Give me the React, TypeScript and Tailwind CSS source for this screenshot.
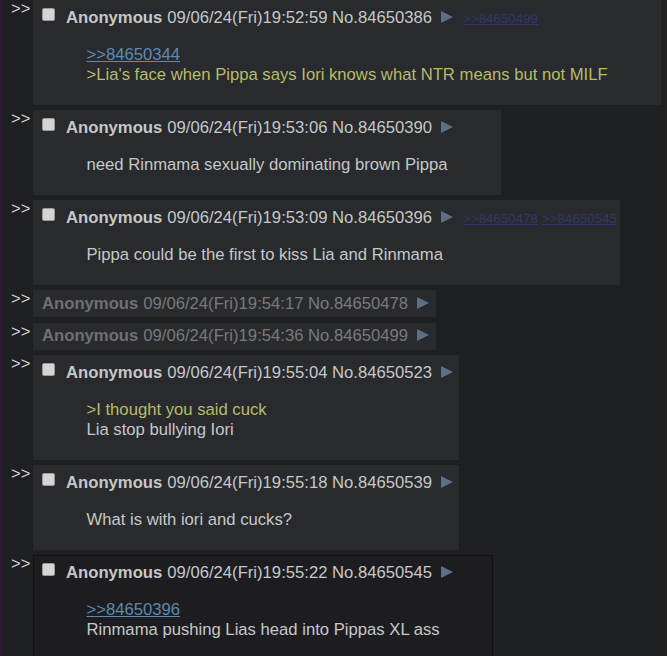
import React from "react";

type Line = { kind: "text" | "green" | "link"; value: string };

type Post = {
  id: string;
  time: string;
  hidden?: boolean;
  highlight?: boolean;
  backlinks?: string[];
  body?: Line[];
};

const posts: Post[] = [
  {
    id: "84650386",
    time: "09/06/24(Fri)19:52:59",
    backlinks: ["84650499"],
    body: [
      { kind: "link", value: "84650344" },
      { kind: "green", value: ">Lia's face when Pippa says Iori knows what NTR means but not MILF" },
    ],
  },
  {
    id: "84650390",
    time: "09/06/24(Fri)19:53:06",
    body: [{ kind: "text", value: "need Rinmama sexually dominating brown Pippa" }],
  },
  {
    id: "84650396",
    time: "09/06/24(Fri)19:53:09",
    backlinks: ["84650478", "84650545"],
    body: [{ kind: "text", value: "Pippa could be the first to kiss Lia and Rinmama" }],
  },
  { id: "84650478", time: "09/06/24(Fri)19:54:17", hidden: true },
  { id: "84650499", time: "09/06/24(Fri)19:54:36", hidden: true },
  {
    id: "84650523",
    time: "09/06/24(Fri)19:55:04",
    body: [
      { kind: "green", value: ">I thought you said cuck" },
      { kind: "text", value: "Lia stop bullying Iori" },
    ],
  },
  {
    id: "84650539",
    time: "09/06/24(Fri)19:55:18",
    body: [{ kind: "text", value: "What is with iori and cucks?" }],
  },
  {
    id: "84650545",
    time: "09/06/24(Fri)19:55:22",
    highlight: true,
    body: [
      { kind: "link", value: "84650396" },
      { kind: "text", value: "Rinmama pushing Lias head into Pippas XL ass" },
    ],
  },
];

function MenuArrow() {
  return (
    <svg width="12" height="12" viewBox="0 0 12 12" className="ml-[9px] mr-[2.5px] inline-block align-baseline">
      <polygon points="0,0 12,6 0,12" fill="#5d6f84" />
    </svg>
  );
}

function PostRow({ post }: { post: Post }) {
  const box = post.highlight
    ? "bg-[#1d1d21] border-[#111111]"
    : "bg-[#282a2e] border-[#282a2e]";

  return (
    <div className="flex items-start">
      <div className="w-[31px] shrink-0 pl-[9px] leading-[18px] text-[#d0d2d0]">&gt;&gt;</div>

      {post.hidden ? (
        <div className="w-fit border border-[#282a2e] bg-[#282a2e] p-[2.5px]">
          <div className="h-[20px] whitespace-nowrap pl-[5.5px] pr-[1px] leading-[20px]">
            <span className="font-bold text-[#707070]">Anonymous</span>
            <span className="ml-[5px] text-[#7a7a7a]">
              {post.time} No.{post.id}
            </span>
            <MenuArrow />
          </div>
        </div>
      ) : (
        <div className={`w-fit border p-[2.5px] ${box}`}>
          <div className="flex h-[25.5px] items-start whitespace-nowrap pt-[4px] leading-[20px]">
            <div className="ml-[5px] mr-[11.5px] mt-[0.5px] h-[13px] w-[13px] shrink-0 rounded-[2px] border border-[#9a9a9a] bg-[#d4d4d4]" />
            <span>
              <span className="font-bold text-[#c5c8c6]">Anonymous</span>
              <span className="ml-[5px] text-[#c5c8c6]">
                {post.time} No.{post.id}
              </span>
              <MenuArrow />
              {post.backlinks?.map((b, i) => (
                <a
                  key={b}
                  className={`${i === 0 ? "ml-[7.5px]" : "ml-[4px]"} text-[13.33px] text-[#33366a] underline`}
                >
                  &gt;&gt;{b}
                </a>
              ))}
            </span>
          </div>
          <div className="mx-[50px] my-4 whitespace-nowrap leading-[20px]">
            {post.body?.map((l, i) => (
              <div key={i}>
                {l.kind === "link" ? (
                  <a className="text-[#5f89ac] underline">&gt;&gt;{l.value}</a>
                ) : l.kind === "green" ? (
                  <span className="text-[#b5bd68]">{l.value}</span>
                ) : (
                  <span className="text-[#c5c8c6]">{l.value}</span>
                )}
              </div>
            ))}
          </div>
        </div>
      )}
    </div>
  );
}

export default function App() {
  return (
    <div className="flex h-[656px] overflow-hidden bg-[#1d1f21] font-['Liberation_Sans',Arial,sans-serif] text-[16.667px]">
      <div className="w-[2px] shrink-0 bg-[#2b1836]" />
      <div className="flex flex-col gap-[5.5px]">
        {posts.map((p) => (
          <PostRow key={p.id} post={p} />
        ))}
      </div>
    </div>
  );
}
